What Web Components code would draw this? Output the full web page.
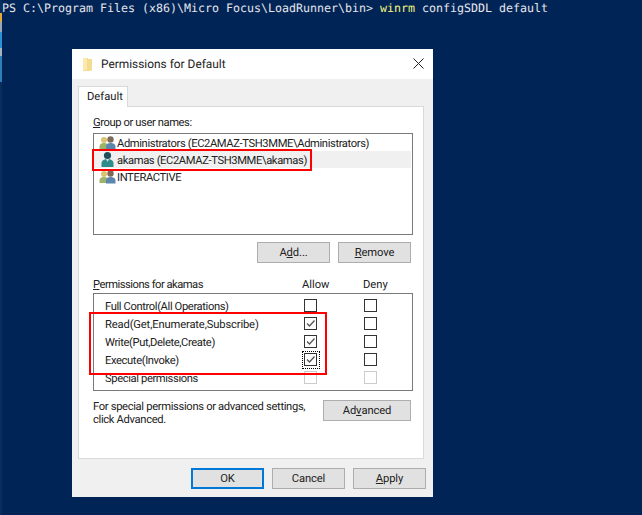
<!DOCTYPE html>
<html>
<head>
<meta charset="utf-8">
<style>
  html, body { margin: 0; padding: 0; height: 100%; background: #012456; overflow: hidden; }
  body { font-family: Roboto, "Noto Sans", sans-serif; text-rendering: geometricPrecision; }
  ps-desktop b { font-weight: normal; color: #f5f57a; }
</style>
</head>
<body>
<ps-desktop>
  <span slot="prompt">PS C:\Program Files (x86)\Micro Focus\LoadRunner\bin&gt; <b>winrm</b> configSDDL default</span>
  <perm-dialog></perm-dialog>
</ps-desktop>

<script>
class PsDesktop extends HTMLElement {
  constructor() {
    super();
    this.attachShadow({ mode: "open" });
    this.shadowRoot.innerHTML = /* html */`
<style>
  :host { display: block; position: relative; width: 642px; height: 515px; background: #012456; }
  .strip {
    position: absolute; left: 0; top: 0; bottom: 0; width: 1.5px;
    background: linear-gradient(#0a2d5c 0 13px, #e0a93a 13px 22px, #9aa7b8 22px 32px, #2a93d8 32px 48px, #a9b3bf 48px 56px, #2c7fb8 56px 82px, #0a2d5c 82px);
  }
  .line {
    padding: 1px 0 0 2px;
    font: 11.63px/14px "DejaVu Sans Mono", monospace;
    color: #e6e6ea;
    white-space: pre;
  }
  ::slotted(span) { display: block; }
</style>
<div class="strip"></div>
<div class="line"><slot name="prompt"></slot></div>
<slot></slot>`;
  }
}

class WinButton extends HTMLElement {
  constructor() {
    super();
    this.attachShadow({ mode: "open" });
    this.shadowRoot.innerHTML = /* html */`
<style>
  :host {
    display: flex; flex: none; align-items: center; justify-content: center;
    box-sizing: border-box; width: 73px; height: 21px;
    background: #e1e1e1; border: 1px solid #adadad;
    font-size: 11.2px; color: #222; letter-spacing: -.1px;
  }
  :host([wide]) { width: 88px; }
  :host([primary]) { border: 2px solid #0078d7; }
</style>
<slot></slot>`;
  }
}

class UserRow extends HTMLElement {
  constructor() {
    super();
    this.attachShadow({ mode: "open" });
    const single = this.hasAttribute("single");
    const icon = single
      ? `<circle cx="8.5" cy="4.5" r="3.6" fill="#1f4f5c"/>
         <path d="M2.5 16v-3.5c0-3 2.5-4.5 6-4.5s6 1.500 6 4.500V16z" fill="#2f8a8c"/>
         <path d="M7 8h3l-1.500 3z" fill="#cfe3e3"/>`
      : `<circle cx="5" cy="6" r="3" fill="#d9c36f"/>
         <path d="M0.500 15v-2.500c0-2.500 2-3.500 4.500-3.500s4 1 4 3.500V15z" fill="#9db36a"/>
         <circle cx="11.500" cy="5.500" r="3.200" fill="#7d6a58"/>
         <path d="M7 15.500v-3c0-2.500 2-3.500 4.500-3.500s5 1 5 3.500v3z" fill="#5b86ad"/>`;
    this.shadowRoot.innerHTML = /* html */`
<style>
  :host {
    display: flex; align-items: center; gap: 1px;
    height: 17px; padding-left: 5px;
    font-size: 11.2px; color: #222; white-space: nowrap;
  }
  :host([selected]) { background: #f0f0f0; margin-right: 1px; }
  svg { width: 17px; height: 17px; flex: none; }
  .txt { padding-top: 1px; letter-spacing: -.38px; }
</style>
<svg viewBox="0 0 17 17">${icon}</svg>
<span class="txt"><slot></slot></span>`;
  }
}

class PermRow extends HTMLElement {
  constructor() {
    super();
    this.attachShadow({ mode: "open" });
    const allow = this.getAttribute("allow") || "";
    const off = this.hasAttribute("disabled") ? "off" : "";
    const check = `<svg viewBox="0 0 11 11"><path d="M2 5.500l2.500 2.500 5-5.500" fill="none" stroke="#555" stroke-width="1.300"/></svg>`;
    this.shadowRoot.innerHTML = /* html */`
<style>
  :host {
    display: grid; grid-template-columns: 199px 13px 47px 13px; align-items: center;
    height: 18px; font-size: 11.2px; color: #222; white-space: nowrap;
    letter-spacing: -.38px;
  }
  .box { position: relative; box-sizing: border-box; align-self: start; width: 13px; height: 13px; margin-top: 2px; border: 1px solid #333; background: #fff; }
  .box.off { border-color: #ccc; }
  .box svg { display: block; width: 11px; height: 11px; }
  .box.focus::after { content: ""; position: absolute; inset: -3px -4px -4px -3px; border: 1px dotted #000; }
</style>
<div><slot></slot></div>
<div class="box ${off} ${allow === "focus" ? "focus" : ""}">${allow ? check : ""}</div>
<div></div>
<div class="box ${off}"></div>`;
  }
}

class RedMark extends HTMLElement {
  constructor() {
    super();
    this.attachShadow({ mode: "open" });
    this.shadowRoot.innerHTML = /* html */`
<style>
  :host { display: block; position: absolute; box-sizing: border-box; border: 2px solid #f00; pointer-events: none; }
</style>`;
  }
}

class PermDialog extends HTMLElement {
  constructor() {
    super();
    this.attachShadow({ mode: "open" });
    this.shadowRoot.innerHTML = /* html */`
<style>
  :host {
    display: block; position: absolute; left: 72px; top: 49px;
    box-sizing: border-box; width: 361px; height: 448px;
    background: #f0f0f0; font-size: 11.2px; color: #222;
  }
  .title {
    display: flex; align-items: center; height: 30px;
    padding-left: 11px; background: #fff; font-size: 11.9px;
  }
  .title svg.folder { width: 10px; height: 14px; margin-right: 8px; }
  .title span { flex: 1; }
  .title svg.close { width: 11px; height: 11px; margin-right: 9px; margin-top: -1px; }
  .tabs { display: flex; padding: 7px 0 0 6px; }
  .tab {
    position: relative; z-index: 1; box-sizing: border-box;
    width: 50px; height: 21px; margin-bottom: -1px; padding-left: 8px;
    line-height: 19px; background: #fff;
    border: 1px solid #d9d9d9; border-bottom: 0;
  }
  .panel {
    box-sizing: border-box; width: 346px; height: 353px; margin-left: 6px;
    padding: 8px 10px 0 14px; background: #fff; border: 1px solid #d9d9d9;
  }
  .label { height: 15px; line-height: 15px; white-space: nowrap; letter-spacing: -.4px; }
  .list {
    box-sizing: border-box; height: 102px; margin-top: 3px;
    border: 1px solid #7a7a7a;
  }
  .btns { display: flex; justify-content: flex-end; gap: 8px; margin: 7px 2px 0 0; }
  .perm-head { display: grid; grid-template-columns: 209px 61px auto; height: 16px; line-height: 15px; margin-top: 14px; }
  .perm-head .name { letter-spacing: -.5px; }
  .perm-box { box-sizing: border-box; height: 98px; border: 1px solid #7a7a7a; padding: 3px 0 0 11px; }
  .adv { display: flex; justify-content: space-between; margin: 9px 2px 0 0; }
  .adv p { margin: 0; width: 225px; line-height: 13px; white-space: nowrap; letter-spacing: -.33px; }
  .foot { display: flex; justify-content: flex-end; gap: 8px; padding: 9px 7px 0 0; }
</style>
<div class="title">
  <svg class="folder" viewBox="0 0 10 14"><path d="M0 1h5v1h4v11l-2 1H0z" fill="#f4dc8e"/><path d="M0 1h4v12H0z" fill="#fbe9ae"/></svg>
  <span>Permissions for Default</span>
  <svg class="close" viewBox="0 0 11 11"><path d="M.5.5l10 10M10.500.5l-10 10" stroke="#222" fill="none"/></svg>
</div>
<div class="tabs"><div class="tab">Default</div></div>
<div class="panel">
  <div class="label"><u>G</u>roup or user names:</div>
  <div class="list">
    <user-row>Administrators (EC2AMAZ-TSH3MME\\Administrators)</user-row>
    <user-row single selected>akamas (EC2AMAZ-TSH3MME\\akamas)</user-row>
    <user-row>INTERACTIVE</user-row>
  </div>
  <div class="btns">
    <win-button>A<u>d</u>d...</win-button>
    <win-button><u>R</u>emove</win-button>
  </div>
  <div class="perm-head"><div class="name"><u>P</u>ermissions for akamas</div><div>Allow</div><div>Deny</div></div>
  <div class="perm-box">
    <perm-row>Full Control(All Operations)</perm-row>
    <perm-row allow="on" style="letter-spacing:-.14px">Read(Get,Enumerate,Subscribe)</perm-row>
    <perm-row allow="on">Write(Put,Delete,Create)</perm-row>
    <perm-row allow="focus">Execute(Invoke)</perm-row>
    <perm-row disabled>Special permissions</perm-row>
  </div>
  <div class="adv">
    <p>For special permissions or advanced settings,<br>click Advanced.</p>
    <win-button wide>Ad<u>v</u>anced</win-button>
  </div>
</div>
<div class="foot">
  <win-button primary>OK</win-button>
  <win-button>Cancel</win-button>
  <win-button><u>A</u>pply</win-button>
</div>
<red-mark style="left:20px;top:100px;width:220px;height:22px"></red-mark>
<red-mark style="left:17px;top:263px;width:238px;height:63px"></red-mark>`;
  }
}

customElements.define("win-button", WinButton);
customElements.define("user-row", UserRow);
customElements.define("perm-row", PermRow);
customElements.define("red-mark", RedMark);
customElements.define("perm-dialog", PermDialog);
customElements.define("ps-desktop", PsDesktop);
</script>
</body>
</html>
